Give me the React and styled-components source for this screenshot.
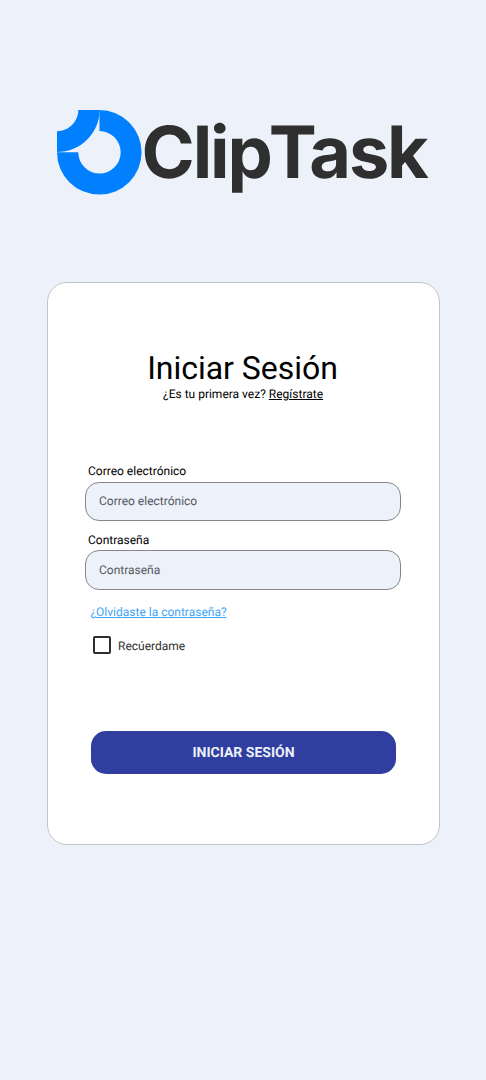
import React from "react";
import styled, { createGlobalStyle } from "styled-components";

const GlobalStyle = createGlobalStyle`
  *, *::before, *::after { box-sizing: border-box; }
  body {
    margin: 0;
    background: #ecf1fa;
    font-family: Roboto, "Liberation Sans", sans-serif;
    color: #000;
    text-rendering: geometricPrecision;
  }
`;

const Page = styled.main`
  display: flex;
  flex-direction: column;
  align-items: center;
  width: 486px;
  height: 1080px;
  padding-top: 110px;
  background: #ecf1fa;
`;

const Brand = styled.header`
  display: flex;
  align-self: flex-start;
  height: 85px;
  margin-left: 57px;
`;

const Mark = styled.svg`
  flex: none;
  width: 85px;
  height: 85px;
`;

const Wordmark = styled.span`
  margin-left: -0.4px;
  font: 700 72px/85px Inter, sans-serif;
  letter-spacing: -2.16px;
  color: #2f2f2f;
  white-space: nowrap;
`;

const Syllable = styled.span`
  display: inline-block;
  & + & { margin-left: -2px; }
`;

const Card = styled.form`
  display: flex;
  flex-direction: column;
  width: 393px;
  height: 563px;
  margin: 87px 0 0 1px;
  padding: 67px 38px 0 37px;
  border: 1px solid #c2c4c8;
  border-radius: 20px;
  background: #fff;
`;

const Title = styled.h1`
  margin: 0 1px 0 0;
  font-size: 32px;
  font-weight: 400;
  line-height: 36px;
  letter-spacing: -0.03px;
  text-align: center;
`;

const Subtitle = styled.p`
  margin: 0 0 59.6px;
  font-size: 12px;
  line-height: 16px;
  text-align: center;
`;

const Link = styled.a`
  color: ${(p) => p.$color || "inherit"};
  text-decoration: underline;
`;

const Label = styled.label`
  margin-left: 3px;
  padding-top: 0.6px;
  font-size: 12px;
  line-height: 18px;
`;

const Input = styled.input`
  width: 316px;
  height: 39.5px;
  margin: 1.4px 0 9.1px;
  padding: 0 13px;
  border: 1px solid #85878b;
  border-radius: 14px;
  background: #ecf1fa;
  font: 400 12px Roboto, sans-serif;
  text-rendering: inherit;
  outline: none;
  &::placeholder { color: #55585d; opacity: 1; }
`;

const Forgot = styled.p`
  margin: 4px 0 15px 5.4px;
  font-size: 12px;
  line-height: 18px;
`;

const Remember = styled.label`
  display: flex;
  align-items: center;
  gap: 7px;
  height: 18px;
  margin-left: 8px;
  color: #2f2f2f;
  font-size: 12px;
`;

const RememberText = styled.span`
  padding-top: 1.6px;
`;

const Checkbox = styled.input`
  appearance: none;
  width: 18px;
  height: 18px;
  margin: 0;
  border: 2px solid #2f2f2f;
  border-radius: 2px;
`;

const Submit = styled.button`
  width: 305px;
  height: 43px;
  margin: 77px 0 0 6px;
  padding: 1.6px 0 0;
  border: 0;
  border-radius: 15px;
  background: #303f9f;
  color: #ecf1fa;
  font: 700 14px Roboto, sans-serif;
  text-rendering: inherit;
`;

export default function App() {
  return (
    <>
      <GlobalStyle />
      <Page>
        <Brand>
          <Mark viewBox="0 0 85 85" fill="#007fff" aria-hidden="true">
            <path d="M21.3 0H42.6C42.6 23.4 23.4 42 0 42V21.2C11.8 21.2 21.3 11.7 21.3 0Z" />
            <path d="M42.4 0A42.3 42.3 0 1 1 0 42.3H21.3A21.2 21.2 0 1 0 42.5 21.1Z" />
          </Mark>
          <Wordmark>
            <Syllable>Clip</Syllable>
            <Syllable>Task</Syllable>
          </Wordmark>
        </Brand>
        <Card>
          <Title>Iniciar Sesión</Title>
          <Subtitle>
            ¿Es tu primera vez? <Link href="#">Regístrate</Link>
          </Subtitle>
          <Label htmlFor="email">Correo electrónico</Label>
          <Input id="email" type="email" placeholder="Correo electrónico" />
          <Label htmlFor="password">Contraseña</Label>
          <Input id="password" type="password" placeholder="Contraseña" />
          <Forgot>
            <Link href="#" $color="#42a5f5">¿Olvidaste la contraseña?</Link>
          </Forgot>
          <Remember>
            <Checkbox type="checkbox" />
            <RememberText>Recúerdame</RememberText>
          </Remember>
          <Submit type="button">INICIAR SESIÓN</Submit>
        </Card>
      </Page>
    </>
  );
}
